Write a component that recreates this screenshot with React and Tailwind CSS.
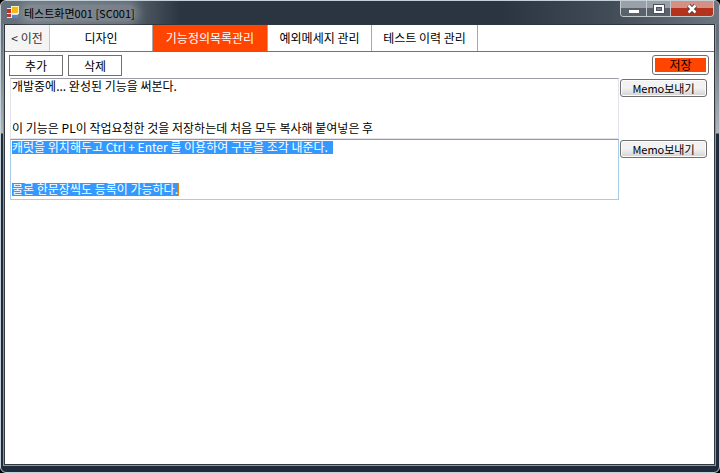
const tabs = [
  { label: '디자인', width: 'w-[103px]' },
  { label: '기능정의목록관리', width: 'w-[115px]', active: true },
  { label: '예외메세지 관리', width: 'w-[104px]' },
  { label: '테스트 이력 관리', width: 'w-[106px]' },
];

const memos = [
  '개발중에... 완성된 기능을 써본다.\n\n\n이 기능은 PL이 작업요청한 것을 저장하는데 처음 모두 복사해 붙여넣은 후',
  '캐럿을 위치해두고 Ctrl + Enter 를 이용하여 구문을 조각 내준다. \n\n\n물론 한문장씩도 등록이 가능하다.',
];

function AppIcon() {
  return (
    <svg width="12" height="13" viewBox="0 0 12 13" aria-hidden="true">
      <rect x="0" y="2" width="5" height="10" fill="#e8e8e8" />
      <rect x="0" y="3" width="4" height="4" fill="#c62d24" />
      <rect x="0" y="8" width="4" height="3" fill="#b53a2c" />
      <rect x="4" y="0" width="8" height="8" fill="#fff3b0" />
      <rect x="5" y="1" width="6" height="6" fill="#f5b716" />
      <rect x="5" y="8" width="6" height="4" fill="#4c85dc" />
      <rect x="5" y="8" width="6" height="1" fill="#cfe0f8" />
    </svg>
  );
}

function TitleBar() {
  return (
    <header className="relative flex h-[23px] shrink-0 items-center gap-1 bg-[linear-gradient(90deg,#66717b_0,#56616b_130px,#2a3541_180px,#2a3541_500px,#414c58_610px,#6d7680_100%)] pl-[6px]">
      <AppIcon />
      <h1 className="rounded-full bg-white/20 px-px text-[11px] leading-4 text-black shadow-[0_0_8px_4px_rgba(255,255,255,0.2)]">
        테스트화면001 [SC001]
      </h1>
      <div className="absolute top-0 right-[5px] flex h-4 divide-x divide-[#c4c9cd] overflow-hidden rounded-b-[4px] border border-t-0 border-[#c4c9cd]">
        <button aria-label="최소화" className="flex w-[26px] items-center justify-center bg-linear-to-b from-[#99a0a7] from-45% to-[#59616b] to-50%">
          <svg width="12" height="12" viewBox="0 0 12 12">
            <rect x="0.5" y="6.5" width="11" height="4" fill="#fff" stroke="#59616b" />
          </svg>
        </button>
        <button aria-label="최대화" className="flex w-6 items-center justify-center bg-linear-to-b from-[#99a0a7] from-45% to-[#59616b] to-50%">
          <svg width="12" height="12" viewBox="0 0 12 12">
            <rect x="0.5" y="1.5" width="11" height="9" fill="#fff" stroke="#4b535d" />
            <rect x="3.5" y="4.5" width="5" height="3" fill="#7a828b" stroke="#4b535d" />
          </svg>
        </button>
        <button aria-label="닫기" className="flex w-[42px] items-center justify-center bg-linear-to-b from-[#d49083] from-45% to-[#b5321c] to-50%">
          <svg width="12" height="12" viewBox="0 0 12 12">
            <path d="M2.5 2.5 9.5 9.5M9.5 2.5 2.5 9.5" stroke="#4b3a40" strokeWidth="4.5" />
            <path d="M2.5 2.5 9.5 9.5M9.5 2.5 2.5 9.5" stroke="#fff" strokeWidth="2.5" />
          </svg>
        </button>
      </div>
    </header>
  );
}

// The active memo paints its highlighted lines, and the caret after them, as background bands.
const activeMemo =
  'border-[#a9cbe6] border-t-[#7d9fc0] text-white bg-no-repeat bg-[linear-gradient(#3399ff,#3399ff),linear-gradient(#3399ff,#3399ff),linear-gradient(#e0861a,#e0861a)] bg-[size:321px_13px,166px_13px,1px_13px] bg-[position:1px_1px,1px_43px,167px_43px]';
const idleMemo = 'border-[#e2e3ea] border-t-[#9a9ba5]';

function MemoRow({ text, active, label }) {
  return (
    <div className="flex items-start gap-px">
      <textarea
        aria-label={label}
        defaultValue={text}
        spellCheck={false}
        className={`h-[61px] min-w-0 flex-1 resize-none overflow-hidden border px-px leading-[14px] outline-none ${
          active ? activeMemo : idleMemo
        }`}
      />
      <button className="mt-px h-[18px] w-[87px] rounded-[3px] border border-[#707070] bg-linear-to-b from-[#f2f2f2] from-50% to-[#d2d2d2] text-[11px] leading-4 shadow-[inset_0_0_0_1px_#fcfcfc]">
        Memo보내기
      </button>
    </div>
  );
}

export default function App() {
  return (
    <div className="h-screen bg-black font-['Noto_Sans_CJK_KR',sans-serif] text-xs text-black">
      <div className="flex h-full flex-col overflow-hidden rounded-[6px] border border-[#c3d0d8] bg-[linear-gradient(180deg,#66717b_0,#66717b_40px,#aeb5bb_132px,#1e2b3a_133px,#1e2b3a_100%)]">
        <TitleBar />
        <main className="mr-1 mb-[7px] ml-[3px] flex min-h-0 flex-1 flex-col border border-[#30373e] bg-white shadow-[0_0_0_1px_#8d979f]">
          <nav className="flex h-[27px] shrink-0 border-b border-[#737373]">
            <button className="w-[45px] border-r border-[#c8c8c8] bg-[#f4f4f4] text-[#333]">&lt; 이전</button>
            {tabs.map((tab) => (
              <button
                key={tab.label}
                aria-pressed={Boolean(tab.active)}
                className={`${tab.width} border-r border-[#a8a8a8] ${tab.active ? 'bg-[#ff4500] text-white' : 'bg-white'}`}
              >
                {tab.label}
              </button>
            ))}
          </nav>
          <div className="flex shrink-0 gap-[5px] px-1 pt-[3px] pb-[2px]">
            <button className="h-[21px] w-[54px] border border-[#707070] bg-white leading-4">추가</button>
            <button className="h-[21px] w-[54px] border border-[#707070] bg-white leading-4">삭제</button>
            <button className="mr-px ml-auto h-5 w-[57px] rounded-[3px] border border-[#707070] bg-white p-[2px]">
              <span className="block bg-[#ff4500] leading-[14px]">저장</span>
            </button>
          </div>
          <section className="flex flex-col pr-[7px] pl-[5px]">
            {memos.map((text, index) => (
              <MemoRow key={text} text={text} label={`메모 ${index + 1}`} active={index === 1} />
            ))}
          </section>
        </main>
      </div>
    </div>
  );
}
